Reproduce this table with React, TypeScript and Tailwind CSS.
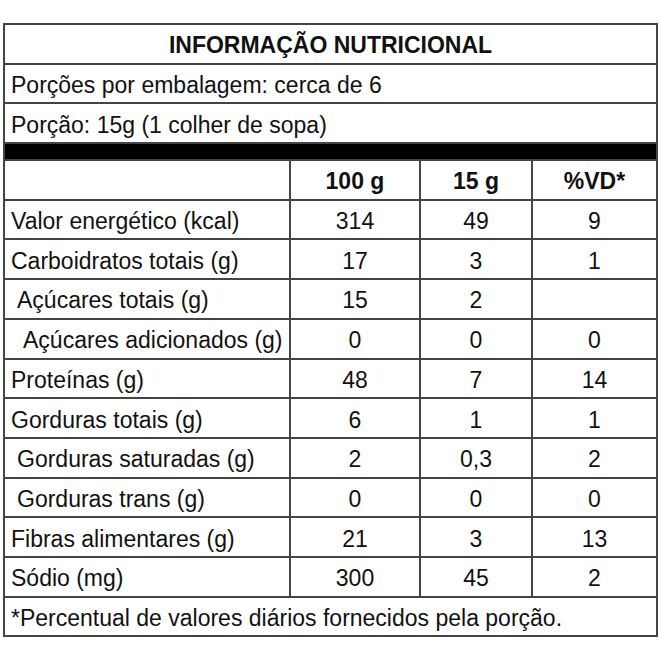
import React from "react";

interface Row {
  label: string;
  indent?: 0 | 1 | 2;
  g100: string;
  g15: string;
  vd: string;
}

const rows: Row[] = [
  { label: "Valor energético (kcal)", g100: "314", g15: "49", vd: "9" },
  { label: "Carboidratos totais (g)", g100: "17", g15: "3", vd: "1" },
  { label: "Açúcares totais (g)", indent: 1, g100: "15", g15: "2", vd: "" },
  { label: "Açúcares adicionados (g)", indent: 2, g100: "0", g15: "0", vd: "0" },
  { label: "Proteínas (g)", g100: "48", g15: "7", vd: "14" },
  { label: "Gorduras totais (g)", g100: "6", g15: "1", vd: "1" },
  { label: "Gorduras saturadas (g)", indent: 1, g100: "2", g15: "0,3", vd: "2" },
  { label: "Gorduras trans (g)", indent: 1, g100: "0", g15: "0", vd: "0" },
  { label: "Fibras alimentares (g)", g100: "21", g15: "3", vd: "13" },
  { label: "Sódio (mg)", g100: "300", g15: "45", vd: "2" },
];

const cell =
  "border-2 border-[#444] h-[39.7px] px-0 pb-0 pt-[4px] leading-none whitespace-nowrap";

const App: React.FC = () => {
  return (
    <div className="w-[660px] h-[660px] bg-white pt-[23px] pl-[3px] font-['Liberation_Sans',Arial,sans-serif] text-[#111] text-[23px]">
      <table className="border-collapse w-[653px] table-fixed">
        <colgroup>
          <col className="w-[286px]" />
          <col className="w-[130px]" />
          <col className="w-[112px]" />
          <col className="w-[125px]" />
        </colgroup>
        <tbody>
          <tr>
            <td colSpan={4} className={`${cell} text-center font-bold`}>
              INFORMAÇÃO NUTRICIONAL
            </td>
          </tr>
          <tr>
            <td colSpan={4} className={`${cell} pl-[6px]`}>
              Porções por embalagem: cerca de 6
            </td>
          </tr>
          <tr>
            <td colSpan={4} className={`${cell} pl-[6px]`}>
              Porção: 15g (1 colher de sopa)
            </td>
          </tr>
          <tr>
            <td colSpan={4} className="border-2 border-[#444] bg-black h-[17px] p-0" />
          </tr>
          <tr>
            <td className={cell} />
            <td className={`${cell} text-center font-bold`}>100 g</td>
            <td className={`${cell} text-center font-bold`}>15 g</td>
            <td className={`${cell} text-center font-bold`}>%VD*</td>
          </tr>
          {rows.map((r) => (
            <tr key={r.label}>
              <td
                className={`${cell} ${
                  r.indent === 2 ? "pl-[18px]" : r.indent === 1 ? "pl-[12px]" : "pl-[6px]"
                }`}
              >
                {r.label}
              </td>
              <td className={`${cell} text-center`}>{r.g100}</td>
              <td className={`${cell} text-center`}>{r.g15}</td>
              <td className={`${cell} text-center`}>{r.vd}</td>
            </tr>
          ))}
          <tr>
            <td colSpan={4} className={`${cell} pl-[6px]`}>
              *Percentual de valores diários fornecidos pela porção.
            </td>
          </tr>
        </tbody>
      </table>
    </div>
  );
};

export default App;
